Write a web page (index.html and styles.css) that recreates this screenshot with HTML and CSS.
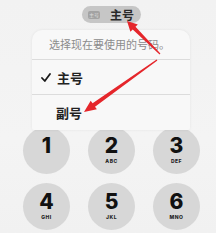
FILE: index.html
```html
<!DOCTYPE html>
<html lang="zh">
<head>
<meta charset="utf-8">
<link rel="stylesheet" href="styles.css">
</head>
<body>
<div class="screen">
  <div class="pill"><span class="sim">主号</span><span class="pill-label">主号</span></div>
  <div class="menu">
    <div class="menu-head">选择现在要使用的号码。</div>
    <div class="menu-item"><svg class="check" viewBox="0 0 10 9" width="10" height="9"><path d="M1 5 L3.8 8 L9 1" fill="none" stroke="#1a1a1a" stroke-width="1.8" stroke-linecap="round" stroke-linejoin="round"/></svg><span>主号</span></div>
    <div class="menu-item"><span class="check"></span><span>副号</span></div>
  </div>
  <div class="keypad">
    <div class="key"><span class="num">1</span><span class="letters">&nbsp;</span></div>
    <div class="key"><span class="num">2</span><span class="letters">ABC</span></div>
    <div class="key"><span class="num">3</span><span class="letters">DEF</span></div>
    <div class="key"><span class="num">4</span><span class="letters">GHI</span></div>
    <div class="key"><span class="num">5</span><span class="letters">JKL</span></div>
    <div class="key"><span class="num">6</span><span class="letters">MNO</span></div>
  </div>
  <svg class="arrows" viewBox="0 0 216 233" width="216" height="233">
    <polygon fill="#e5262b" points="160.4,53.6 135.5,26.7 137.8,24.4 127,21 130.4,31.8 132.7,29.5 159.6,54.4"/>
    <polygon fill="#e5262b" points="156.6,59.5 92.6,103.2 90.7,100.7 84,112 96.9,109.3 95.0,106.7 157.4,60.5"/>
  </svg>
</div>
</body>
</html>
```

FILE: styles.css
```css
html, body {
  margin: 0;
  padding: 0;
  background: #f1f1f1;
}
.screen {
  position: relative;
  width: 216px;
  height: 233px;
  overflow: hidden;
  box-sizing: border-box;
  padding-top: 6px;
  display: flex;
  flex-direction: column;
  align-items: flex-start;
  font-family: "Noto Sans CJK SC", "Noto Sans", sans-serif;
  background: linear-gradient(180deg, #f2f2f2 0%, #f4f4f4 60%, #f1f1f1 100%);
}
.pill {
  margin-left: 82px;
  height: 17px;
  box-sizing: border-box;
  padding: 0 7px 0 6px;
  display: flex;
  align-items: center;
  gap: 10px;
  border-radius: 9px;
  background: #c6c6c6;
}
.sim {
  width: 12px;
  height: 8px;
  border-radius: 2px;
  background: #a3a3a3;
  color: #dedede;
  font-size: 5px;
  line-height: 8px;
  text-align: center;
  overflow: hidden;
}
.pill-label {
  font-size: 12px;
  font-weight: 700;
  color: #2a2a2a;
  line-height: 17px;
}
.menu {
  position: relative;
  z-index: 1;
  margin-left: 32px;
  margin-top: 7px;
  width: 158px;
  background: #f8f8f8;
  border-radius: 10px 10px 2px 2px;
  box-shadow: 0 0 3px rgba(0, 0, 0, 0.07);
}
.menu-head {
  height: 29px;
  line-height: 29px;
  padding-left: 17px;
  font-size: 11px;
  color: #8c8c8c;
  border-bottom: 1px solid #dcdcdc;
}
.menu-item {
  height: 34px;
  display: flex;
  align-items: center;
  padding-left: 9px;
  font-size: 13px;
  font-weight: 700;
  color: #222;
}
.menu-item + .menu-item {
  border-top: 1px solid #dcdcdc;
}
.menu-item:last-child {
  height: 35px;
}
.check {
  display: inline-block;
  width: 10px;
  height: 9px;
  margin-right: 6px;
  flex: none;
}
.menu-item:last-child .check {
  margin-right: 5px;
}
.keypad {
  margin-top: -3px;
  margin-left: 23px;
  display: grid;
  grid-template-columns: repeat(3, 47px);
  column-gap: 18px;
  row-gap: 9px;
}
.key {
  width: 47px;
  height: 47px;
  border-radius: 50%;
  background: #d7d7d7;
  display: flex;
  flex-direction: column;
  align-items: center;
  box-sizing: border-box;
  padding-top: 11px;
}
.num {
  font-family: Inter, "Liberation Sans", sans-serif;
  font-weight: 800;
  font-size: 21px;
  line-height: 16px;
  color: #111;
}
.letters {
  margin-top: 4px;
  font-family: Inter, "Liberation Sans", sans-serif;
  font-weight: 800;
  font-size: 5px;
  line-height: 6px;
  letter-spacing: 0.5px;
  color: #1e1e1e;
}
.arrows {
  position: absolute;
  left: 0;
  top: 0;
  z-index: 2;
  pointer-events: none;
}
```
